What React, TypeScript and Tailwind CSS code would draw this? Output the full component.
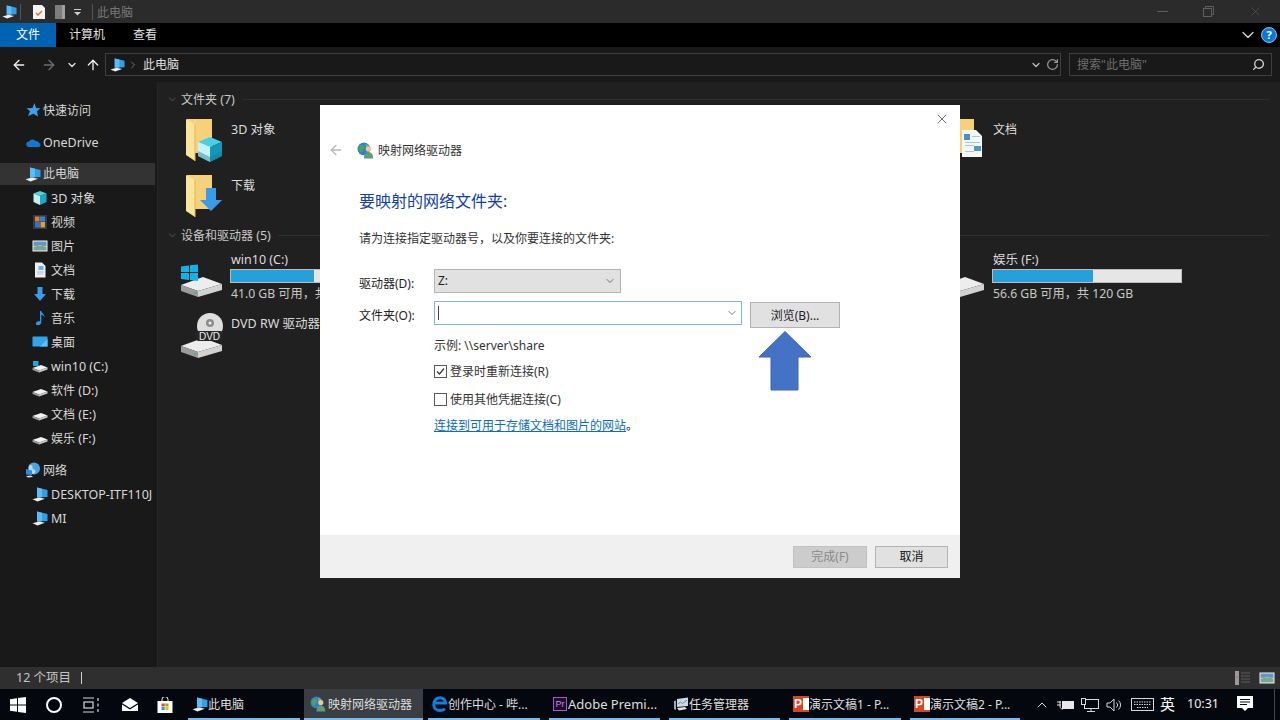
import React from 'react';
import { ArrowLeft, ArrowRight, ArrowUp, ChevronDown, ChevronUp, ChevronRight, RotateCw, Search, X } from 'lucide-react';

type IP = { className?: string };

const Pc = ({ className = 'w-4 h-4' }: IP) => (
  <svg viewBox="0 0 16 16" className={className}>
    <polygon points="5,1.500 15.500,4 15.500,11 5,11.500" fill="#2f9fea" />
    <polygon points="5,1.500 10,2.700 10,11.300 5,11.500" fill="#5cbcf4" />
    <polygon points="0.500,13.200 7,11.500 13,12.800 5.500,15.500" fill="#eeeeee" />
  </svg>
);
const Star = ({ className = 'w-4 h-4' }: IP) => (
  <svg viewBox="0 0 16 16" className={className}>
    <polygon points="9.500,1 11,6 15.500,6.300 12,9.300 13,14.500 8.500,11.700 3,14 5,9.300 1.500,6.300 7.500,6" fill="#3a9fee" />
  </svg>
);
const Cloud = ({ className = 'w-4 h-4' }: IP) => (
  <svg viewBox="0 0 16 16" className={className}>
    <path d="M3 13h10.500a2.200 2.200 0 0 0 .4-4.300A3 3 0 0 0 10.500 7 4 4 0 0 0 4 7.400 2.900 2.900 0 0 0 3 13z" fill="#0f78d4" />
  </svg>
);
const Globe = ({ className = 'w-4 h-4' }: IP) => (
  <svg viewBox="0 0 16 16" className={className}>
    <circle cx="9" cy="6.500" r="6" fill="#4aa3e6" />
    <path d="M5 3c2 0 3 1 2.500 2.500S9 7 10 8s0 3-1 4c-2 0-3-1-4-2.500S3 5 5 3z" fill="#b5dcf5" />
    <polygon points="1,7 7,8.500 7,13 1,12.500" fill="#2b8fdc" />
    <polygon points="1,14 6,13.500 8,15 3,15.500" fill="#ddd" />
  </svg>
);
const CubeS = ({ className = 'w-4 h-4' }: IP) => (
  <svg viewBox="0 0 16 16" className={className}>
    <polygon points="8,1 14.500,3.500 8,6 1.500,3.500" fill="#4fd3e6" />
    <polygon points="1.500,3.500 8,6 8,15 1.500,12" fill="#bff0f5" />
    <polygon points="14.500,3.500 8,6 8,15 14.500,12" fill="#1ca7c4" />
  </svg>
);
const Video = ({ className = 'w-4 h-4' }: IP) => (
  <svg viewBox="0 0 16 16" className={className}>
    <rect x="1" y="1" width="14" height="14" fill="#333a44" />
    <rect x="3" y="2.500" width="4.500" height="5" fill="#e07b30" />
    <rect x="8" y="2.500" width="5" height="5" fill="#3b7fd0" />
    <rect x="3" y="8" width="5" height="5.500" fill="#2e74c8" />
    <rect x="8.500" y="8" width="4.500" height="5.500" fill="#d9a035" />
  </svg>
);
const Picture = ({ className = 'w-4 h-4' }: IP) => (
  <svg viewBox="0 0 16 16" className={className}>
    <rect x="0.500" y="2.500" width="15" height="11" fill="#eef2f5" />
    <rect x="1.500" y="3.500" width="13" height="4" fill="#5f95cf" />
    <rect x="1.500" y="7" width="13" height="5.500" fill="#7aa58f" />
    <path d="M1.500 9 Q8 6 14.500 9 V8 H1.500z" fill="#cfe1ea" />
  </svg>
);
const DocS = ({ className = 'w-4 h-4' }: IP) => (
  <svg viewBox="0 0 16 16" className={className}>
    <polygon points="3,0.500 10,0.500 13.500,4 13.500,15.500 3,15.500" fill="#eef1f4" />
    <rect x="6.500" y="4" width="5" height="4" fill="#6eb0e6" />
    <rect x="5" y="9.500" width="6.500" height="1" fill="#9bb8d0" />
    <rect x="5" y="11.500" width="6.500" height="1" fill="#b9c9d6" />
  </svg>
);
const DownS = ({ className = 'w-4 h-4' }: IP) => (
  <svg viewBox="0 0 16 16" className={className}>
    <polygon points="5.500,1 10.500,1 10.500,8 14,8 8,15 2,8 5.500,8" fill="#3a9be8" />
  </svg>
);
const Music = ({ className = 'w-4 h-4' }: IP) => (
  <svg viewBox="0 0 16 16" className={className}>
    <path d="M8 1h1.300c.3 2.500 3.700 3.200 3.200 6.500-.5-1.800-2-2.500-3.200-2.800V12.500c0 1.600-1.700 2.700-3.400 2.700S3.500 14.200 4 12.800 6.500 10.800 8 11.300z" fill="#1f9cf0" />
  </svg>
);
const DesktopS = ({ className = 'w-4 h-4' }: IP) => (
  <svg viewBox="0 0 16 16" className={className}>
    <rect x="0.500" y="2.500" width="15" height="10" rx="0.500" fill="#2ea3ee" />
    <polygon points="8,12.500 15.500,5 15.500,12.500" fill="#61bdf5" />
  </svg>
);
const DriveS = ({ className = 'w-4 h-4', win = false }: IP & { win?: boolean }) => (
  <svg viewBox="0 0 16 16" className={className}>
    <polygon points="0.500,10 9,7 15.500,9.500 7,12.500" fill="#f2f2f2" />
    <polygon points="0.500,10 7,12.500 7,14.500 0.500,12" fill="#9a9a9a" />
    <polygon points="15.500,9.500 7,12.500 7,14.500 15.500,11.500" fill="#c9c9c9" />
    {win && <rect x="1" y="3" width="5.500" height="5" fill="#1fa6e8" />}
  </svg>
);

const FolderBase = () => (
  <>
    <polygon points="8,2 33,2 33,36 16,36 8,4" fill="#f5d27a" />
    <polygon points="7,2 16,7 16,44 7,38" fill="#fce59b" />
    <polygon points="15.500,7 16.500,7 16.500,44 15.500,44" fill="#e0b757" />
  </>
);
const FolderCube = () => (
  <svg viewBox="0 0 48 48" className="w-12 h-12 shrink-0 mt-1">
    <FolderBase />
    <polygon points="31,20 43,25 31,30 19,25" fill="#48cfe8" />
    <polygon points="19,25 31,30 31,45 19,39" fill="#c6f3f7" />
    <polygon points="43,25 31,30 31,45 43,39" fill="#1597ba" />
    <polygon points="19,34 31,40 43,34 43,39 31,45 19,39" fill="#0f7f9f" opacity="0.45" />
  </svg>
);
const FolderDown = () => (
  <svg viewBox="0 0 48 48" className="w-12 h-12 shrink-0 mt-1">
    <FolderBase />
    <polygon points="27,15 37,15 37,27 43,27 32,38 21,27 27,27" fill="#3a9be8" />
  </svg>
);
const FolderDoc = () => (
  <svg viewBox="0 0 48 48" className="w-12 h-12 shrink-0 mt-1">
    <FolderBase />
    <polygon points="21,13 35,13 41,19 41,40 21,40" fill="#f4f6f8" />
    <rect x="23" y="17" width="6" height="6" fill="#4a8fd0" />
    <rect x="31" y="19" width="8" height="1" fill="#a9c6dc" />
    <rect x="24" y="25" width="15" height="1" fill="#a9c6dc" />
    <rect x="24" y="28" width="9" height="1" fill="#a9c6dc" />
    <rect x="33" y="29" width="7" height="5" fill="#4a9bc9" />
    <rect x="24" y="34" width="9" height="1" fill="#a9c6dc" />
  </svg>
);
const DriveBody = ({ y = 0 }: { y?: number }) => (
  <g transform={`translate(0 ${y})`}>
    <polygon points="2,29 24,21 43,28 19,35" fill="#ededed" />
    <polygon points="2,29 19,35 19,41 2,35" fill="#9c9c9c" />
    <polygon points="43,28 19,35 19,41 43,34" fill="#d2d2d2" />
    <rect x="15" y="36" width="2.500" height="2" fill="#3fbf6a" />
  </g>
);
const DriveWin = () => (
  <svg viewBox="0 0 48 48" className="w-12 h-12 shrink-0 mt-[7px]">
    <DriveBody />
    <polygon points="2,10.500 10,9.500 10,16 2,16" fill="#10b4ea" />
    <polygon points="11,9.300 19,8.500 19,16 11,16" fill="#10b4ea" />
    <polygon points="2,17 10,17 10,24 2,23" fill="#10b4ea" />
    <polygon points="11,17 19,17 19,25 11,24" fill="#10b4ea" />
  </svg>
);
const DrivePlain = () => (
  <svg viewBox="0 0 48 48" className="w-12 h-12 shrink-0 mt-[7px]">
    <DriveBody />
  </svg>
);
const DriveDvd = () => (
  <svg viewBox="0 0 48 48" className="w-12 h-12 shrink-0 mt-[3px]">
    <DriveBody y={7} />
    <circle cx="31" cy="16" r="13" fill="#dedede" />
    <circle cx="31" cy="13" r="4" fill="#8c8c8c" />
    <circle cx="31" cy="13" r="1.500" fill="#eee" />
    <rect x="17.500" y="21" width="26" height="10" rx="2" fill="#262626" />
    <text x="30.500" y="29.800" textAnchor="middle" fontSize="10" fill="#eeeeee" fontFamily="Liberation Sans">DVD</text>
  </svg>
);

const Win = () => (
  <svg viewBox="0 0 16 16" className="w-4 h-4 shrink-0">
    <polygon points="0,2.300 7,1.200 7,7.500 0,7.500" fill="#fff" />
    <polygon points="8,1 16,0 16,7.500 8,7.500" fill="#fff" />
    <polygon points="0,8.500 7,8.500 7,14.800 0,13.700" fill="#fff" />
    <polygon points="8,8.500 16,8.500 16,16 8,15" fill="#fff" />
  </svg>
);
const TaskView = () => (
  <svg viewBox="0 0 18 16" className="w-[18px] h-4 shrink-0" fill="none" stroke="#d8d8d8" strokeWidth="1.200">
    <path d="M1 1h11M1 15h11" />
    <rect x="2" y="5" width="9" height="6" />
    <path d="M16 1v3M16 6.500v3M16 12v3" />
  </svg>
);
const Mail = () => (
  <svg viewBox="0 0 16 14" className="w-4 h-[14px] shrink-0">
    <polygon points="0,5 8,0 16,5 8,10" fill="#fff" />
    <polygon points="0,6.500 8,11.500 16,6.500 16,13 0,13" fill="#fff" />
  </svg>
);
const Store = () => (
  <svg viewBox="0 0 16 16" className="w-4 h-4 shrink-0">
    <path d="M5 4V2.500a3 3 0 0 1 6 0V4" fill="none" stroke="#fff" />
    <rect x="0.500" y="4" width="15" height="12" fill="#fff" />
    <rect x="4.500" y="6.500" width="3.200" height="3" fill="#e8482a" />
    <rect x="8.300" y="6.500" width="3.200" height="3" fill="#7fba00" />
    <rect x="4.500" y="10" width="3.200" height="3" fill="#1ea1f1" />
    <rect x="8.300" y="10" width="3.200" height="3" fill="#ffb900" />
  </svg>
);
const Edge = () => (
  <svg viewBox="0 0 16 16" className="w-4 h-4 shrink-0" fill="none" stroke="#0f80e0" strokeWidth="3">
    <path d="M2 7h11.500C13.500 3.500 11 1.800 8 1.800 4 1.800 1.800 5 1.800 8.500c0 3.700 2.700 6 6 6 2 0 3.700-.5 5.200-1.700" />
  </svg>
);
const Pr = () => (
  <div className="w-[14px] h-[14px] mr-px shrink-0 border border-[#a45bc8] bg-[#1e0a2c] text-[#c58ae8] text-[9px] leading-[12px] text-center [font-family:'Liberation_Sans',sans-serif]">Pr</div>
);
const TaskMgr = () => (
  <svg viewBox="0 0 16 16" className="w-4 h-4 shrink-0">
    <polygon points="4,3 15,1.500 15,10 4,11" fill="#cfd8e0" />
    <path d="M5 8l2.500-2 2 1.500L14 4" stroke="#5e8fb5" fill="none" />
    <polygon points="1,5 3,4.500 3,14 1,13" fill="#a7a7a7" />
    <polygon points="4,12 12,11 14,13 6,14.500" fill="#e6e6e6" />
  </svg>
);
const Ppt = () => (
  <div className="relative w-4 h-4 shrink-0 bg-[#d24726]">
    <div className="absolute right-0 top-[2px] w-[6px] h-3 bg-white" />
    <div className="absolute left-[1px] top-0 text-[12px] leading-4 font-bold text-white [font-family:'Liberation_Sans',sans-serif]">P</div>
  </div>
);
const MapIcon = ({ className = 'w-4 h-4' }: IP) => (
  <svg viewBox="0 0 16 16" className={className}>
    <circle cx="6.500" cy="6.500" r="6" fill="#2f7fd0" />
    <path d="M2 4c2-2 4-2 5 0s-1 3-2 5-2 1-3-1 0-3 0-4z" fill="#4aa35a" />
    <path d="M8 2c2 0 4 2 4 3s-2 1-3 0-1-2-1-3z" fill="#6fb56e" />
    <circle cx="10.800" cy="6.500" r="2.600" fill="#e8c6a0" />
    <path d="M6.500 15.500c0-4 2-6 4.300-6s4.500 2 4.500 6z" fill="#5f9c7c" />
  </svg>
);

const L = ({ children }: { children: React.ReactNode }) => <span className="text-[12.5px]">{children}</span>;

const sideRows: { t: React.ReactNode; i: React.ReactNode; top?: boolean; sel?: boolean; gap?: boolean }[] = [
  { t: '快速访问', i: <Star />, top: true },
  { t: <L>OneDrive</L>, i: <Cloud />, top: true, gap: true },
  { t: '此电脑', i: <Pc />, top: true, sel: true },
  { t: <L>3D 对象</L>, i: <CubeS /> },
  { t: '视频', i: <Video /> },
  { t: '图片', i: <Picture /> },
  { t: '文档', i: <DocS /> },
  { t: '下载', i: <DownS /> },
  { t: '音乐', i: <Music /> },
  { t: '桌面', i: <DesktopS /> },
  { t: <L>win10 (C:)</L>, i: <DriveS win /> },
  { t: <span>软件 <L>(D:)</L></span>, i: <DriveS /> },
  { t: <span>文档 <L>(E:)</L></span>, i: <DriveS /> },
  { t: <span>娱乐 <L>(F:)</L></span>, i: <DriveS /> },
  { t: '网络', i: <Globe />, top: true, gap: true },
  { t: <L>DESKTOP-ITF110J</L>, i: <Pc /> },
  { t: <L>MI</L>, i: <Pc /> },
];

const Header = ({ t }: { t: React.ReactNode }) => (
  <div className="flex items-center h-4 pl-[9px] pr-[10px]">
    <ChevronDown className="w-[11px] h-[11px] text-[#6a6a6a] mr-[3px] shrink-0" strokeWidth={1.5} />
    <span className="text-[12px] text-[#c8c8c8] whitespace-nowrap mr-[7px] leading-4 translate-y-px">{t}</span>
    <div className="flex-1 h-px bg-[#2e2e2e]" />
  </div>
);

const Tile = ({ i, t }: { i: React.ReactNode; t: React.ReactNode }) => (
  <div className="w-[254px] h-14 flex gap-1 shrink-0">
    {i}
    <div className="pt-[9px] text-[12px] leading-4 text-[#dcdcdc] whitespace-nowrap">{t}</div>
  </div>
);

const Blank = () => <div className="w-[254px] shrink-0" />;

const DriveTile = ({ i, t, pct, s }: { i: React.ReactNode; t: React.ReactNode; pct: number; s: React.ReactNode }) => (
  <div className="w-[254px] h-[58px] flex gap-[3px] shrink-0">
    {i}
    <div className="pt-[3px] w-[190px] shrink-0">
      <div className="pl-px text-[12.5px] leading-4 text-[#dcdcdc] whitespace-nowrap">{t}</div>
      <div className="mt-px h-[14px] bg-[#e6e6e6] border border-[#bcbcbc]">
        <div className="h-full bg-[#26a0da]" style={{ width: `${pct}%` }} />
      </div>
      <div className="mt-[3px] pl-px text-[12.2px] leading-4 text-[#c8c8c8] whitespace-nowrap">{s}</div>
    </div>
  </div>
);

const TaskItem = ({ i, t, w, ml, active, latin }: { i: React.ReactNode; t: string; w: string; ml: string; active?: boolean; latin?: boolean }) => (
  <div className={`${w} ${ml} h-full shrink-0 flex items-center ${active ? 'bg-[#3a3d42] pl-[6px] gap-[2px]' : 'pl-[4px] gap-0'} border-b-2 border-[#76b9ed]`}>
    {i}
    <span className={`${latin ? 'text-[13px]' : 'text-[12px]'} text-[#dedede] whitespace-nowrap leading-none translate-y-px`}>{t}</span>
  </div>
);

export default function App() {
  return (
    <div className="relative w-[1280px] h-[720px] overflow-hidden flex flex-col bg-[#202020] text-[12px] [font-family:'Noto_Sans','Noto_Sans_CJK_SC',sans-serif]">
      {/* title bar */}
      <div className="h-[23px] shrink-0 bg-[#2b2b2b] flex items-center pl-[2px]">
        <Pc className="w-[15px] h-[15px]" />
        <div className="w-px h-4 bg-[#555] ml-[3px]" />
        <svg viewBox="0 0 12 14" className="w-3 h-[14px] ml-3">
          <polygon points="0,0 9,0 12,3 12,14 0,14" fill="#f4f4f4" />
          <path d="M3 8l2 2 4-4" stroke="#e8662a" strokeWidth="1.300" fill="none" />
        </svg>
        <svg viewBox="0 0 10 14" className="w-[10px] h-[14px] ml-[10px]">
          <rect width="10" height="14" fill="#7d7d7d" />
          <rect x="7" width="3" height="14" fill="#a0a0a0" />
        </svg>
        <svg viewBox="0 0 8 8" className="w-2 h-2 ml-[9px]">
          <rect y="1" width="7" height="1" fill="#ccc" />
          <polygon points="0,4 7,4 3.500,7.500" fill="#ccc" />
        </svg>
        <div className="w-px h-4 bg-[#555] ml-[10px]" />
        <span className="ml-1 text-[#777] text-[12px] translate-y-px">此电脑</span>
        <div className="flex-1" />
        <div className="w-[11px] h-px bg-[#5e5e5e] mr-[35px]" />
        <svg viewBox="0 0 11 11" className="w-[11px] h-[11px] mr-[34px]" fill="none" stroke="#5e5e5e">
          <rect x="0.500" y="2.500" width="8" height="8" />
          <path d="M2.500 2.500V0.500H10.500V8.500H8.500" />
        </svg>
        <X className="w-[15px] h-[15px] text-[#5e5e5e] mr-[17px]" strokeWidth={1} />
      </div>
      {/* ribbon tabs */}
      <div className="h-6 shrink-0 bg-black flex items-center text-[12px]">
        <div className="w-14 h-full bg-[#0063b1] text-white flex items-center justify-center">文件</div>
        <span className="ml-[13px] text-[#e0e0e0]">计算机</span>
        <span className="ml-7 text-[#e0e0e0]">查看</span>
        <div className="flex-1" />
        <ChevronDown className="w-5 h-5 text-[#dcdcdc] mr-[3px]" strokeWidth={1.500} />
        <div className="w-4 h-4 mr-[3px] rounded-full bg-[#0a78d7] border border-[#8cc0ee] text-white text-[11px] font-bold leading-[14px] text-center">?</div>
      </div>
      {/* address row */}
      <div className="h-[35px] shrink-0 bg-[#191919] flex items-center">
        <ArrowLeft className="w-4 h-4 ml-[11px] text-[#f0f0f0]" strokeWidth={2} />
        <ArrowRight className="w-4 h-4 ml-[14px] text-[#6c6c6c]" strokeWidth={2} />
        <ChevronDown className="w-3 h-3 ml-[9px] text-[#e8e8e8]" strokeWidth={2.500} />
        <ArrowUp className="w-4 h-4 ml-[7px] text-[#f0f0f0]" strokeWidth={2} />
        <div className="ml-[4px] w-[956px] h-[23px] border border-[#3e3e3e] flex items-center pl-1 pr-px">
          <Pc className="w-[15px] h-[15px]" />
          <ChevronRight className="w-3 h-3 ml-[2px] text-[#8a8a8a]" strokeWidth={1.500} />
          <span className="ml-[4px] text-[#e0e0e0] text-[12px]">此电脑</span>
          <div className="flex-1" />
          <ChevronDown className="w-3 h-3 mr-[4px] text-[#bdbdbd]" strokeWidth={2.500} />
          <RotateCw className="w-[13px] h-[13px] text-[#9a9a9a]" strokeWidth={2.200} />
        </div>
        <div className="ml-2 w-[203px] h-[23px] border border-[#3e3e3e] flex items-center pl-[7px] pr-[6px]">
          <span className="text-[#6e6e6e] text-[12px]">搜索"此电脑"</span>
          <div className="flex-1" />
          <Search className="w-[13px] h-[13px] text-[#cfcfcf] -scale-x-100" strokeWidth={2.500} />
        </div>
      </div>
      {/* body */}
      <div className="flex-1 min-h-0 flex">
        <div className="w-[158px] shrink-0 bg-[#191919] pt-4 border-r border-[#262626]">
          {sideRows.map((r, k) => (
            <div
              key={k}
              className={`${r.sel ? 'mt-[9px] mb-px h-[22px] mr-[2px] bg-[#333333]' : 'h-6'} ${r.gap ? 'mt-2' : ''} flex items-center ${r.top ? 'pl-[25px] gap-[2px]' : 'pl-[32px] gap-[3px]'}`}
            >
              {r.i}
              <span className={`text-[12px] text-[#d8d8d8] whitespace-nowrap leading-none ${r.sel ? '' : 'translate-y-px'}`}>{r.t}</span>
            </div>
          ))}
        </div>
        <div className="flex-1 min-w-0 pt-[9px] overflow-hidden">
          <Header t={<span>文件夹 <L>(7)</L></span>} />
          <div className="mt-[6px] pl-[21px] flex flex-wrap">
            <Tile i={<FolderCube />} t={<L>3D 对象</L>} />
            <Blank />
            <Blank />
            <Tile i={<FolderDoc />} t="文档" />
            <Tile i={<FolderDown />} t="下载" />
          </div>
          <div className="mt-[2px]">
            <Header t={<span>设备和驱动器 <L>(5)</L></span>} />
          </div>
          <div className="mt-[6px] pl-[21px] flex flex-wrap">
            <DriveTile i={<DriveWin />} t="win10 (C:)" pct={44} s="41.0 GB 可用，共" />
            <Blank />
            <Blank />
            <DriveTile i={<DrivePlain />} t="娱乐 (F:)" pct={53} s="56.6 GB 可用，共 120 GB" />
            <Tile i={<DriveDvd />} t={<L>DVD RW 驱动器</L>} />
          </div>
        </div>
      </div>
      {/* status */}
      <div className="h-[22px] shrink-0 bg-[#2f2f2f] flex items-center pl-4 text-[#c4c4c4]">
        <span className="text-[12.5px] leading-none">12 个项目</span>
        <div className="ml-[10px] w-px h-3 bg-[#cfcfcf]" />
        <div className="flex-1" />
        <svg viewBox="0 0 15 14" className="w-[15px] h-[14px] mr-[9px]">
          <rect x="0" y="0" width="4" height="14" fill="#9a9a9a" />
          <rect x="1" y="5" width="2" height="2" fill="#d86a5a" />
          <path d="M6 2h9M6 5h9M6 8h9M6 11h9" stroke="#5c5c5c" />
        </svg>
        <Picture className="w-[16px] h-[16px] mr-[5px]" />
      </div>
      {/* taskbar */}
      <div className="h-[31px] shrink-0 bg-[#05070f] flex items-center">
        <div className="ml-[10px]"><Win /></div>
        <div className="ml-[20px] w-4 h-4 rounded-full border-2 border-white shrink-0" />
        <div className="ml-[20px]"><TaskView /></div>
        <div className="ml-[22px]"><Mail /></div>
        <div className="ml-[19px]"><Store /></div>
        <TaskItem ml="ml-[15px]" w="w-[112px]" i={<Pc />} t="此电脑" />
        <TaskItem ml="ml-[4px]" w="w-[119px]" active i={<MapIcon />} t="映射网络驱动器" />
        <TaskItem ml="ml-[5px]" w="w-[112px]" i={<Edge />} t="创作中心 - 哔..." />
        <TaskItem ml="ml-[9px]" w="w-[111px]" latin i={<Pr />} t="Adobe Premi..." />
        <TaskItem ml="ml-[9px]" w="w-[111px]" i={<TaskMgr />} t="任务管理器" />
        <TaskItem ml="ml-[9px]" w="w-[112px]" i={<Ppt />} t="演示文稿1 - P..." />
        <TaskItem ml="ml-[9px]" w="w-[110px]" i={<Ppt />} t="演示文稿2 - P..." />
        <ChevronUp className="ml-[14px] w-4 h-4 text-[#e0e0e0] shrink-0" strokeWidth={1.500} />
        <svg viewBox="0 0 18 12" className="ml-[7px] w-[18px] h-3 shrink-0">
          <path d="M0 3h4M0 6h4M3 2v5c0 2 1 3 3 3" stroke="#e8e8e8" fill="none" />
          <rect x="5" y="2" width="12" height="8" fill="#e8e8e8" />
        </svg>
        <svg viewBox="0 0 18 14" className="ml-[6px] w-[18px] h-[14px] shrink-0" fill="none" stroke="#d8d8d8">
          <rect x="3.500" y="1.500" width="14" height="9" />
          <path d="M10 10.500V13.500M6 13.500H14" />
          <rect x="0.500" y="0.500" width="4" height="6" fill="#05070f" />
        </svg>
        <svg viewBox="0 0 16 14" className="ml-[7px] w-4 h-[14px] shrink-0" fill="none" stroke="#d8d8d8">
          <path d="M1 5h3l4-4v12l-4-4H1z" />
          <path d="M10.500 4.500a3.500 3.500 0 0 1 0 5M12.500 2.500a6 6 0 0 1 0 9" />
        </svg>
        <svg viewBox="0 0 23 13" className="ml-[9px] w-[23px] h-[13px] shrink-0" fill="none" stroke="#d8d8d8">
          <rect x="0.500" y="0.500" width="22" height="12" />
          <path d="M3 4h17M3 6.500h17M6 9.500h11" strokeDasharray="1.500 1" />
        </svg>
        <span className="ml-[6px] text-[15px] text-white leading-none shrink-0">英</span>
        <span className="ml-[12px] text-[12.5px] text-[#f0f0f0] leading-none shrink-0">10:31</span>
        <svg viewBox="0 0 16 17" className="ml-[18px] w-4 h-[17px] shrink-0">
          <path d="M0 0h16v12h-5l-3 3-3-3H0z" fill="#fff" />
          <path d="M3 3.500h10M3 6h10M3 8.500h7" stroke="#05070f" />
        </svg>
        <div className="ml-[21px] w-px h-[31px] bg-[#44464c] shrink-0" />
      </div>

      {/* dialog */}
      <div className="absolute left-[320px] top-[105px] w-[640px] h-[473px] bg-white flex flex-col text-[#222]">
        <X className="absolute right-[10px] top-[6px] w-4 h-4 text-[#444]" strokeWidth={1.200} />
        <div className="mt-[33px] h-6 flex items-center pl-[8px]">
          <ArrowLeft className="w-4 h-4 text-[#b8b8b8]" strokeWidth={2} />
          <MapIcon className="w-[17px] h-[17px] ml-[13px]" />
          <span className="ml-[4px] text-[12px] text-[#333] translate-y-px">映射网络驱动器</span>
        </div>
        <div className="mt-[27px] h-6 pl-[39px] text-[16px] leading-6 text-[#1040a8]">要映射的网络文件夹:</div>
        <div className="mt-[15px] h-5 pt-px pl-[39px] text-[12px] leading-5 text-[#333]">请为连接指定驱动器号，以及你要连接的文件夹:</div>
        <div className="mt-[21px] h-6 flex pl-[39px]">
          <span className="w-[75px] shrink-0 pt-[5px] text-[12px] leading-5">驱动器(D):</span>
          <div className="w-[187px] h-6 bg-[#e1e1e1] border border-[#b4b4b4] flex items-center px-[3px]">
            <span className="text-[12px] text-[#222]">Z:</span>
            <div className="flex-1" />
            <ChevronDown className="w-3 h-3 text-[#444] mr-[1px]" strokeWidth={1.500} />
          </div>
        </div>
        <div className="mt-2 h-[27px] flex pl-[39px]">
          <span className="w-[75px] shrink-0 pt-[5px] text-[12px] leading-5">文件夹(O):</span>
          <div className="w-[308px] h-6 border border-[#7eb4ea] flex items-center pl-[3px]">
            <div className="w-px h-[14px] bg-[#444]" />
            <div className="flex-1" />
            <ChevronDown className="w-3 h-3 text-[#444] mr-[3px]" strokeWidth={1.500} />
          </div>
          <div className="ml-2 mt-px w-[90px] h-[26px] pt-px bg-[#e1e1e1] border border-[#b4b4b4] flex items-center justify-center text-[12px] text-[#222]">浏览(B)...</div>
        </div>
        <div className="mt-[7px] h-5 pt-px pl-[114px] text-[12px] leading-5 text-[#333]">示例: \\server\share</div>
        <div className="mt-[6px] h-5 pl-[114px] flex items-center gap-[3px]">
          <div className="w-[13px] h-[13px] border border-[#555] flex items-center justify-center">
            <svg viewBox="0 0 11 11" className="w-[11px] h-[11px]" fill="none" stroke="#333" strokeWidth="1.200"><path d="M2 5.500l2.500 2.500 4.500-5.500" /></svg>
          </div>
          <span className="text-[12px] text-[#333] translate-y-px">登录时重新连接(R)</span>
        </div>
        <div className="mt-2 h-5 pl-[114px] flex items-center gap-[3px]">
          <div className="w-[13px] h-[13px] border border-[#555]" />
          <span className="text-[12px] text-[#333] translate-y-px">使用其他凭据连接(C)</span>
        </div>
        <div className="mt-[6px] h-5 pt-px pl-[114px] text-[12px] leading-5"><span className="text-[#0a6cc4] underline">连接到可用于存储文档和图片的网站</span><span>。</span></div>
        <div className="mt-auto h-[43px] bg-[#f0f0f0] flex items-center justify-end gap-2 pr-3">
          <div className="w-[74px] h-[22px] bg-[#cccccc] border border-[#c2c2c2] flex items-center justify-center text-[12px] text-[#8a8a8a]">完成(F)</div>
          <div className="w-[73px] h-[22px] bg-[#e1e1e1] border border-[#b4b4b4] flex items-center justify-center text-[12px] text-[#111]">取消</div>
        </div>
      </div>

      {/* annotation arrow */}
      <svg viewBox="0 0 54 60" className="absolute left-[758px] top-[331px] w-[54px] h-[60px]">
        <polygon points="27,0.500 53,26 40,26 40,59 13,59 13,26 1,26" fill="#4472c4" stroke="#3a66b0" />
      </svg>
    </div>
  );
}
